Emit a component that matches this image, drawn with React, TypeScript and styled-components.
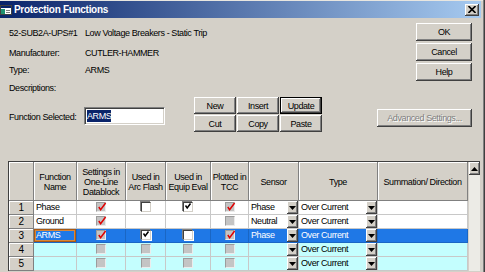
import React from 'react';
import styled, { createGlobalStyle, css } from 'styled-components';

const GlobalStyle = createGlobalStyle`
  html, body {
    margin: 0;
    padding: 0;
    background: #d4d0c8;
    overflow: hidden;
  }
  body {
    font-family: "Liberation Sans", Arial, sans-serif;
    font-size: 9px;
    letter-spacing: -0.4px;
    color: #000;
  }
`;

const Window = styled.div`
  width: 485px;
  height: 272px;
  box-sizing: border-box;
  padding: 1px 4px 0 0;
  background: #d4d0c8;
  box-shadow: inset -1px 0 #404040, inset -2px 0 #808080, inset 0 1px #e8e6e0;
  display: flex;
  flex-direction: column;
  overflow: hidden;
`;

const TitleBar = styled.div`
  height: 17px;
  display: flex;
  align-items: center;
  padding: 0 2px 0 0;
  background: linear-gradient(90deg, #0a246a 0%, #a6caf0 100%);
`;

const TitleText = styled.span`
  margin-left: 2px;
  color: #fff;
  font-weight: bold;
  font-size: 10px;
  letter-spacing: -0.3px;
`;

const bevel = css`
  background: #d4d0c8;
  box-shadow: inset -1px -1px #404040, inset 1px 1px #fff, inset -2px -2px #808080, inset 2px 2px #d4d0c8;
`;

const CloseBox = styled.div`
  ${bevel};
  margin-left: auto;
  width: 14px;
  height: 12px;
  display: flex;
  align-items: center;
  justify-content: center;
`;

const Content = styled.div`
  flex: 1;
  padding-left: 8px;
  display: flex;
  flex-direction: column;
`;

const Top = styled.div`
  display: flex;
  justify-content: space-between;
`;

const Info = styled.div`
  padding: 8px 0 0 1px;
  display: flex;
  flex-direction: column;
`;

const InfoRow = styled.div<{ $h: number }>`
  height: ${(p) => p.$h}px;
  display: flex;
  line-height: 14px;
  white-space: nowrap;
`;

const Label = styled.span`
  width: 76px;
  flex: none;
`;

const SideButtons = styled.div`
  padding-top: 5px;
  margin-right: 9px;
  display: flex;
  flex-direction: column;
  gap: 2px;
`;

const Button = styled.div<{ $w?: number; $h?: number; $default?: boolean; $disabled?: boolean }>`
  ${bevel};
  box-sizing: border-box;
  width: ${(p) => (p.$w ? `${p.$w}px` : 'auto')};
  height: ${(p) => p.$h ?? 18}px;
  display: flex;
  align-items: center;
  justify-content: center;
  white-space: nowrap;
  ${(p) =>
    p.$default &&
    css`
      border: 1px solid #000;
      box-shadow: inset -1px -1px #404040, inset 1px 1px #fff, inset -2px -2px #808080;
    `}
  ${(p) =>
    p.$disabled &&
    css`
      color: #808080;
      text-shadow: 1px 1px #fff;
    `}
`;

const MidRow = styled.div`
  margin-top: 2px;
  display: flex;
  align-items: flex-start;
`;

const FuncLabel = styled.span`
  width: 75px;
  margin: 13px 0 0 1px;
  line-height: 14px;
  white-space: nowrap;
`;

const TextBox = styled.div`
  margin-top: 10px;
  width: 81px;
  height: 18px;
  box-sizing: border-box;
  background: #fff;
  border: 1px solid;
  border-color: #808080 #fff #fff #808080;
  box-shadow: inset 1px 1px #404040, inset -1px -1px #d4d0c8;
  padding: 2px 0 0 2px;
`;

const Selection = styled.span`
  background: #0a246a;
  color: #fff;
  line-height: 12px;
  display: inline-block;
`;

const EditGrid = styled.div`
  margin-left: 29px;
  display: grid;
  grid-template-columns: repeat(3, 42px);
  grid-auto-rows: 17px;
  gap: 1px;
`;

const AdvancedWrap = styled.div`
  margin: 12px 9px 0 auto;
`;

const GridArea = styled.div`
  margin-top: 29px;
  margin-right: 1px;
  display: flex;
  border-top: 1px solid #404040;
  border-left: 1px solid #404040;
  background: #fff;
`;

const Grid = styled.div`
  display: grid;
  grid-template-columns: 25px 43px 49px 40px 45px 38px 50px 79px 90px;
  grid-template-rows: 39px;
  grid-auto-rows: 14px;
`;

const HeaderCell = styled.div`
  box-sizing: border-box;
  background: #d4d0c8;
  border-right: 1px solid #808080;
  border-bottom: 1px solid #808080;
  box-shadow: inset 1px 1px #fff;
  display: flex;
  align-items: center;
  justify-content: center;
  text-align: center;
  line-height: 10px;
  padding-top: 1px;
  white-space: pre;
`;

type RowKind = 'white' | 'selected' | 'new';

const rowBg: Record<RowKind, string> = {
  white: '#ffffff',
  selected: '#1f78e6',
  new: '#c4fefe',
};

const Cell = styled.div<{ $kind: RowKind; $center?: boolean; $focus?: boolean }>`
  box-sizing: border-box;
  background: ${(p) => rowBg[p.$kind]};
  color: ${(p) => (p.$kind === 'selected' ? '#fff' : '#000')};
  border-right: 1px solid ${(p) => (p.$kind === 'selected' ? '#1a66c4' : '#c8c8c8')};
  border-bottom: 1px solid ${(p) => (p.$kind === 'selected' ? '#1a66c4' : '#c8c8c8')};
  display: flex;
  align-items: ${(p) => (p.$center ? 'flex-start' : 'center')};
  justify-content: ${(p) => (p.$center ? 'center' : 'flex-start')};
  padding-left: ${(p) => (p.$center ? 0 : 2)}px;
  padding-top: ${(p) => (p.$center ? 1 : 0)}px;
  line-height: 13px;
  white-space: nowrap;
  overflow: hidden;
  ${(p) =>
    p.$focus &&
    css`
      box-shadow: inset 0 0 0 1px #a85a14, inset 0 0 0 2px #d8863a;
    `}
`;

const RowHead = styled(HeaderCell)`
  padding-top: 0;
  font-size: 10px;
`;

const ComboText = styled.span`
  flex: 1;
`;

const DropBtn = styled.div`
  ${bevel};
  flex: none;
  width: 11px;
  height: 13px;
  display: flex;
  align-items: center;
  justify-content: center;
`;

const Box = styled.div<{ $enabled?: boolean }>`
  position: relative;
  width: 10px;
  height: 10px;
  box-sizing: border-box;
  ${(p) =>
    p.$enabled
      ? css`
          background: #fff;
          border: 1px solid;
          border-color: #404040 #d4d0c8 #d4d0c8 #404040;
          box-shadow: -1px -1px #808080, 1px 1px #fff;
        `
      : css`
          background: #c4c4c4;
          border: 1px solid;
          border-color: #9c9c9c #ececec #ececec #9c9c9c;
        `}
  svg {
    position: absolute;
    left: 0;
    top: -1px;
  }
`;

const ScrollBar = styled.div`
  width: 12px;
  background: #ecebe6;
  border-left: 1px solid #d4d0c8;
`;

const ScrollBtn = styled.div`
  ${bevel};
  height: 13px;
  display: flex;
  align-items: center;
  justify-content: center;
`;

const TitleIcon = () => (
  <svg width="12" height="12" viewBox="0 0 12 12">
    <rect x="0.5" y="1.5" width="11" height="9" fill="#fff" stroke="#404040" />
    <rect x="1" y="2" width="10" height="2" fill="#0a246a" />
    <rect x="1" y="5" width="4" height="5" fill="#1e9070" />
    <rect x="6" y="6" width="4" height="1" fill="#808080" />
    <rect x="6" y="8" width="4" height="1" fill="#808080" />
  </svg>
);

const Arrow = ({ up }: { up?: boolean }) => (
  <svg width="7" height="4" viewBox="0 0 7 4">
    <path d={up ? 'M3.5 0 L7 4 L0 4 Z' : 'M0 0 L7 0 L3.5 4 Z'} fill="#000" />
  </svg>
);

const Check = ({ enabled, checked }: { enabled?: boolean; checked?: boolean }) => (
  <Box $enabled={enabled}>
    {checked &&
      (enabled ? (
        <svg width="8" height="8" viewBox="0 0 8 8">
          <path d="M1.5 3.5 L3.2 6 L6.5 1.5" stroke="#000" strokeWidth="1.5" fill="none" />
        </svg>
      ) : (
        <svg width="10" height="10" viewBox="0 0 10 10">
          <path d="M1.8 5 L3.6 7.6 L8.6 1" stroke="#e00000" strokeWidth="1.5" fill="none" />
        </svg>
      ))}
  </Box>
);

type CheckState = null | { enabled?: boolean; checked?: boolean };

interface Row {
  name: string;
  kind: RowKind;
  checks: CheckState[];
  sensor: string;
}

const rows: Row[] = [
  {
    name: 'Phase',
    kind: 'white',
    checks: [{ checked: true }, { enabled: true }, { enabled: true, checked: true }, { checked: true }],
    sensor: 'Phase',
  },
  {
    name: 'Ground',
    kind: 'white',
    checks: [{ checked: true }, null, null, {}],
    sensor: 'Neutral',
  },
  {
    name: 'ARMS',
    kind: 'selected',
    checks: [{ checked: true }, { enabled: true, checked: true }, { enabled: true }, { checked: true }],
    sensor: 'Phase',
  },
  { name: '', kind: 'new', checks: [{}, {}, {}, {}], sensor: '' },
  { name: '', kind: 'new', checks: [{}, {}, {}, {}], sensor: '' },
];

const headers = [
  '',
  'Function\nName',
  'Settings in\nOne-Line\nDatablock',
  'Used in\nArc Flash',
  'Used in\nEquip Eval',
  'Plotted in\nTCC',
  'Sensor',
  'Type',
  'Summation/ Direction',
];

export default function App() {
  return (
    <>
      <GlobalStyle />
      <Window>
        <TitleBar>
          <TitleIcon />
          <TitleText>Protection Functions</TitleText>
          <CloseBox>
            <svg width="8" height="7" viewBox="0 0 8 7">
              <path d="M0.5 0 L7.5 7 M7.5 0 L0.5 7" stroke="#000" strokeWidth="1.6" />
            </svg>
          </CloseBox>
        </TitleBar>
        <Content>
          <Top>
            <Info>
              <InfoRow $h={20}>
                <Label>52-SUB2A-UPS#1</Label>
                <span>Low Voltage Breakers - Static Trip</span>
              </InfoRow>
              <InfoRow $h={17}>
                <Label>Manufacturer:</Label>
                <span>CUTLER-HAMMER</span>
              </InfoRow>
              <InfoRow $h={18}>
                <Label>Type:</Label>
                <span>ARMS</span>
              </InfoRow>
              <InfoRow $h={14}>
                <Label>Descriptions:</Label>
              </InfoRow>
            </Info>
            <SideButtons>
              <Button $w={56}>OK</Button>
              <Button $w={56}>Cancel</Button>
              <Button $w={56}>Help</Button>
            </SideButtons>
          </Top>
          <MidRow>
            <FuncLabel>Function Selected:</FuncLabel>
            <TextBox>
              <Selection>ARMS</Selection>
            </TextBox>
            <EditGrid>
              <Button $h={17}>New</Button>
              <Button $h={17}>Insert</Button>
              <Button $h={17} $default>Update</Button>
              <Button $h={17}>Cut</Button>
              <Button $h={17}>Copy</Button>
              <Button $h={17}>Paste</Button>
            </EditGrid>
            <AdvancedWrap>
              <Button $w={95} $disabled>Advanced Settings...</Button>
            </AdvancedWrap>
          </MidRow>
          <GridArea>
            <Grid>
              {headers.map((h, i) => (
                <HeaderCell key={i}>{h}</HeaderCell>
              ))}
              {rows.map((r, i) => (
                <React.Fragment key={i}>
                  <RowHead>{i + 1}</RowHead>
                  <Cell $kind={r.kind} $focus={r.kind === 'selected'}>
                    {r.name}
                  </Cell>
                  {r.checks.map((c, j) => (
                    <Cell key={j} $kind={r.kind} $center>
                      {c && <Check enabled={c.enabled} checked={c.checked} />}
                    </Cell>
                  ))}
                  <Cell $kind={r.kind}>
                    <ComboText>{r.sensor}</ComboText>
                    <DropBtn>
                      <Arrow />
                    </DropBtn>
                  </Cell>
                  <Cell $kind={r.kind}>
                    <ComboText>Over Current</ComboText>
                    <DropBtn>
                      <Arrow />
                    </DropBtn>
                  </Cell>
                  <Cell $kind={r.kind} />
                </React.Fragment>
              ))}
            </Grid>
            <ScrollBar>
              <ScrollBtn>
                <Arrow up />
              </ScrollBtn>
            </ScrollBar>
          </GridArea>
        </Content>
      </Window>
    </>
  );
}
